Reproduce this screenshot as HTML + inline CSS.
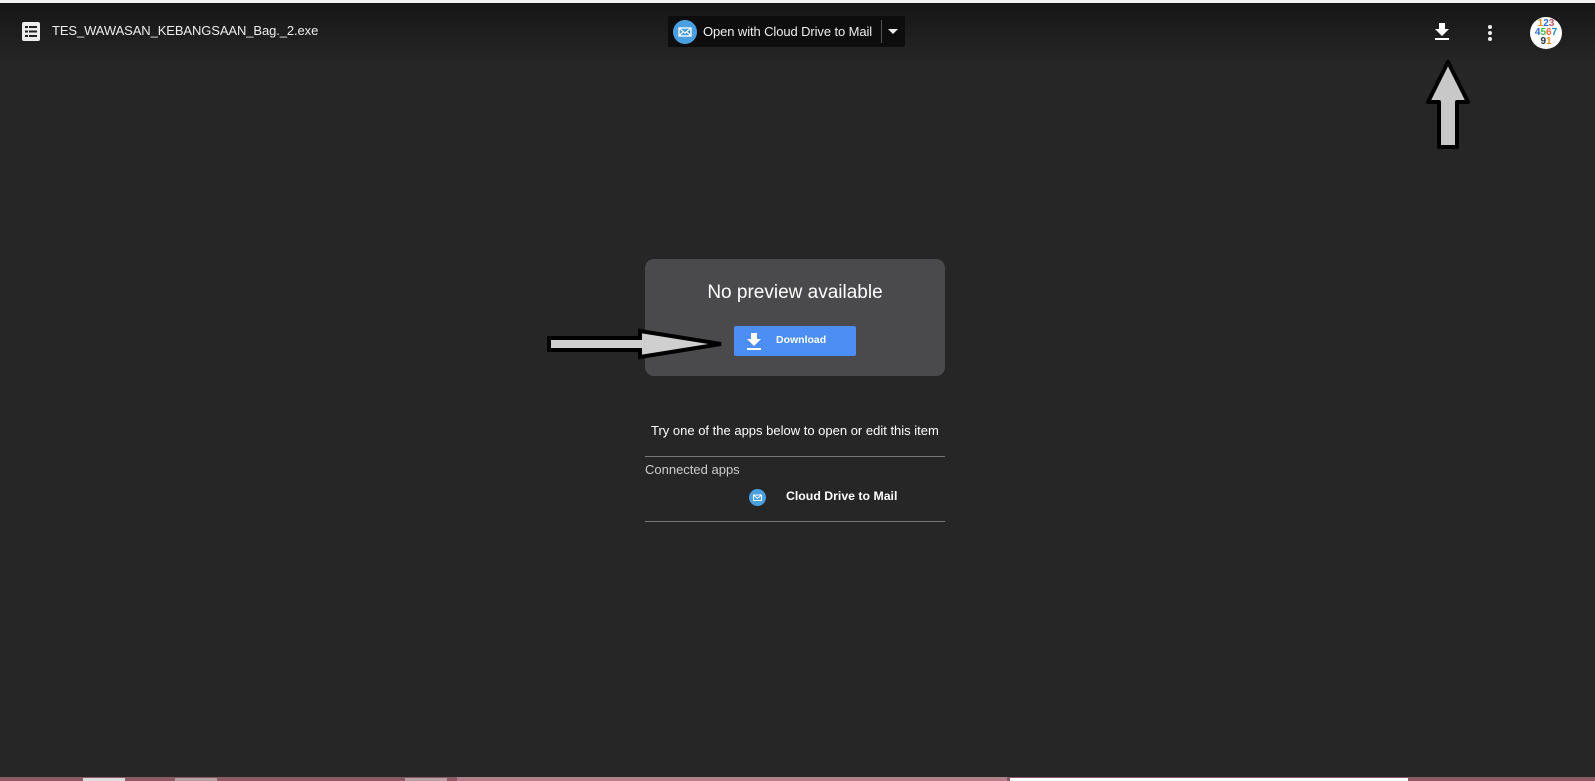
<!DOCTYPE html>
<html><head><style>
body{margin:0;width:1595px;height:781px;background:#262626;font-family:"Liberation Sans",sans-serif;position:relative;overflow:hidden;color:#fff}
.abs{position:absolute}
</style></head><body>
<div class="abs" style="left:0;top:0;width:1595px;height:3px;background:#f2f2f2"></div>
<div class="abs" style="left:0;top:3px;width:1595px;height:62px;background:linear-gradient(#161616,#262626)"></div>
<svg class="abs" style="left:22px;top:22px" width="18" height="19" viewBox="0 0 18 19"><rect x="0" y="0" width="18" height="19" rx="2" fill="#eee"/><g fill="#222"><rect x="3" y="4" width="3" height="2"/><rect x="7" y="4" width="8" height="2"/><rect x="3" y="8.5" width="3" height="2"/><rect x="7" y="8.5" width="8" height="2"/><rect x="3" y="13" width="3" height="2"/><rect x="7" y="13" width="8" height="2"/></g></svg>
<div class="abs" style="left:52px;top:23px;font-size:13px;letter-spacing:-0.1px;color:#eee">TES_WAWASAN_KEBANGSAAN_Bag._2.exe</div>
<div class="abs" style="left:668px;top:16px;width:237px;height:31px;background:#0d0d0d;border-radius:2px"></div>
<svg class="abs" style="left:673px;top:20px" width="24" height="24"><circle cx="12" cy="12" r="12" fill="#4a9fe0"/><rect x="6" y="8" width="12" height="8" fill="none" stroke="#fff" stroke-width="1.3"/><path d="M6 8l6 5 6-5M6 16l4-4M18 16l-4-4" stroke="#fff" stroke-width="1.1" fill="none"/></svg>
<div class="abs" style="left:703px;top:24px;font-size:13px;letter-spacing:-0.1px;color:#eee">Open with Cloud Drive to Mail</div>
<div class="abs" style="left:881px;top:20px;width:1px;height:23px;background:#555"></div>
<div class="abs" style="left:888px;top:29px;width:0;height:0;border-left:5px solid transparent;border-right:5px solid transparent;border-top:5px solid #eee"></div>
<svg class="abs" style="left:1434px;top:23px" width="16" height="18" viewBox="0 0 16 18"><path d="M5 0h6v6h4l-7 7-7-7h4z" fill="#fff"/><rect x="1" y="15" width="14" height="2" fill="#fff"/></svg>
<svg class="abs" style="left:1487px;top:24px" width="6" height="18"><circle cx="3" cy="3" r="2" fill="#eee"/><circle cx="3" cy="9" r="2" fill="#eee"/><circle cx="3" cy="15" r="2" fill="#eee"/></svg>
<div class="abs" style="left:1530px;top:17px;width:32px;height:32px;border-radius:50%;background:#fff;overflow:hidden;font:bold 10px 'Liberation Sans';line-height:9px;text-align:center">
<div style="margin-top:2px"><span style="color:#e68a1a">1</span><span style="color:#2a6fd6">2</span><span style="color:#b56">3</span></div>
<div><span style="color:#2a6fd6">4</span><span style="color:#4b4">5</span><span style="color:#e63">6</span><span style="color:#28c">7</span></div>
<div><span style="color:#234">9</span><span style="color:#e68a1a">1</span></div></div>
<svg class="abs" style="left:1424px;top:58px" width="48" height="94"><path d="M24 4 L44 44 H33 V89 H15 V44 H4 Z" fill="#c8c8c8" stroke="#000" stroke-width="4" stroke-linejoin="round"/></svg>
<div class="abs" style="left:645px;top:259px;width:300px;height:117px;background:#4a494b;border-radius:9px"></div>
<div class="abs" style="left:645px;top:282px;width:300px;text-align:center;font-size:19px;color:#fff">No preview available</div>
<div class="abs" style="left:734px;top:326px;width:122px;height:30px;background:#4d8ef5;border-radius:2px"></div>
<svg class="abs" style="left:746px;top:333px" width="16" height="17" viewBox="0 0 16 17"><path d="M5 0h6v6h4l-7 7-7-7h4z" fill="#fff"/><rect x="1" y="15" width="14" height="2" fill="#fff"/></svg>
<div class="abs" style="left:776px;top:334px;font-size:10.5px;font-weight:bold;color:#fff">Download</div>
<svg class="abs" style="left:546px;top:328px" width="182" height="32"><path d="M3 10 H94 V3 L175 16 L94 29 V22 H3 Z" fill="#cfcfcf" stroke="#000" stroke-width="4" stroke-linejoin="miter"/></svg>
<div class="abs" style="left:651px;top:423px;font-size:13px;color:#fff">Try one of the apps below to open or edit this item</div>
<div class="abs" style="left:645px;top:456px;width:300px;height:1px;background:#777"></div>
<div class="abs" style="left:645px;top:462px;font-size:13px;color:#ccc">Connected apps</div>
<svg class="abs" style="left:749px;top:489px" width="17" height="17"><circle cx="8.5" cy="8.5" r="8.5" fill="#4a9fe0"/><rect x="4.5" y="6" width="8" height="5.5" fill="none" stroke="#fff" stroke-width="1"/><path d="M4.5 6l4 3.5 4-3.5" stroke="#fff" fill="none"/></svg>
<div class="abs" style="left:786px;top:489px;font-size:12.3px;font-weight:bold;color:#fff">Cloud Drive to Mail</div>
<div class="abs" style="left:645px;top:521px;width:300px;height:1px;background:#777"></div>
<div class="abs" style="left:0;top:777px;width:1595px;height:4px;background:#8a5a64"></div>
<div class="abs" style="left:457px;top:777px;width:550px;height:4px;background:#b08088"></div>
<div class="abs" style="left:1010px;top:778px;width:398px;height:3px;background:#fff"></div>
<div class="abs" style="left:83px;top:778px;width:42px;height:3px;background:#ddd"></div>
<div class="abs" style="left:175px;top:778px;width:42px;height:3px;background:#b9a0a5"></div>
<div class="abs" style="left:405px;top:778px;width:42px;height:3px;background:#b9a0a5"></div>
</body></html>
